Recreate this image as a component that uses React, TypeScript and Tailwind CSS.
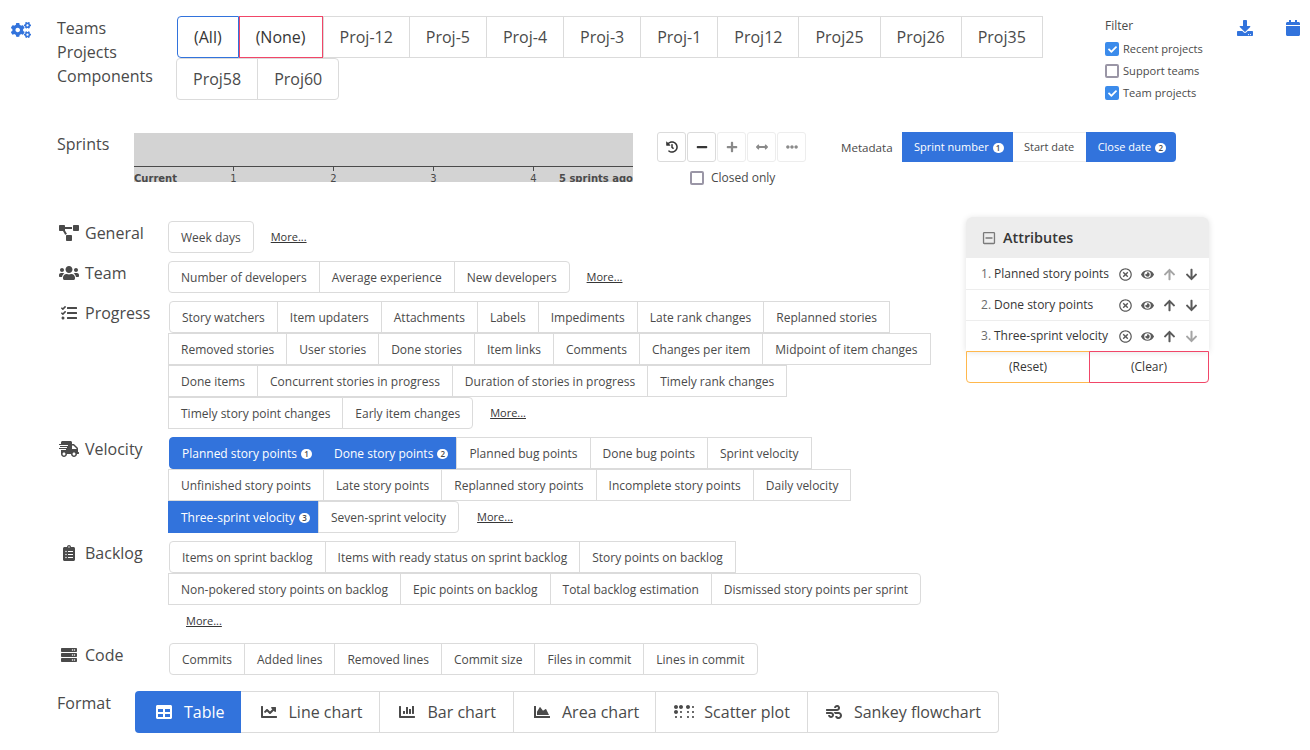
import type { ReactNode } from 'react';
import { FaArrowDown, FaArrowUp, FaArrowsAltH, FaBraille, FaCalendar, FaChartArea, FaChartBar, FaChartLine, FaCheck, FaClipboardList, FaCogs, FaDownload, FaEllipsisH, FaEye, FaHistory, FaMinus, FaPlus, FaProjectDiagram, FaRegMinusSquare, FaRegTimesCircle, FaServer, FaShippingFast, FaTable, FaTasks, FaUsers, FaWind } from 'react-icons/fa';

/* label, optional badge number: a badge means the button is selected */
type Metric = [string, number?];

function Badge({ n }: { n: number }) {
  return (
    <span className="ml-[4px] inline-flex h-[10px] w-[11px] items-center justify-center rounded-full bg-white text-[8px] font-semibold leading-none text-[#4a4a4a]">
      {n}
    </span>
  );
}

function MetricRow({ items, inset, roundLeft, roundRight, more }: { items: Metric[]; inset?: boolean; roundLeft?: boolean; roundRight?: boolean; more?: string }) {
  return (
    <div className={`flex h-[32px] items-center ${inset ? 'ml-px' : ''}`}>
      {items.map(([label, badge], i) => (
        <div
          key={label}
          className={`flex h-full items-center border pl-[12px] pt-px text-[12px] whitespace-nowrap ${i > 0 ? '-ml-px' : ''} ${badge ? 'border-[#3273dc] bg-[#3273dc] text-white' : 'border-[#dbdbdb] bg-white pr-[12px] text-[#4a4a4a]'} ${badge && items[i + 1]?.[1] ? 'pr-[9px]' : ''} ${badge && !items[i + 1]?.[1] ? 'pr-[8px]' : ''} ${roundLeft && i === 0 ? 'rounded-l-[4px]' : ''} ${roundRight && i === items.length - 1 ? 'rounded-r-[4px]' : ''}`}
        >
          {label}
          {badge ? <Badge n={badge} /> : null}
        </div>
      ))}
      {more ? <a className={`${more} pt-px text-[11px] text-[#363636] underline`}>More...</a> : null}
    </div>
  );
}

function Category({ icon, label, children, className }: { icon: ReactNode; label: string; children: ReactNode; className?: string }) {
  return (
    <div className={`flex ${className ?? ''}`}>
      <div className="flex h-[24px] w-[111px] shrink-0 items-center">
        <span className="ml-[2px] mr-[6px] flex w-[20px] shrink-0 items-center justify-center text-[#4a4a4a] [&>svg]:h-[16px] [&>svg]:w-[20px]">{icon}</span>
        <span className="text-[16px]">{label}</span>
      </div>
      <div className="flex flex-col">{children}</div>
    </div>
  );
}

function Check({ checked, label, className }: { checked?: boolean; label: string; className?: string }) {
  return (
    <div className={`flex items-center ${className ?? ''}`}>
      <span className={`flex h-[14px] w-[14px] items-center justify-center rounded-[2px] border-2 ${checked ? 'border-[#3b8beb] bg-[#3b8beb]' : 'border-[#9a96a6] bg-white'}`}>
        {checked ? <FaCheck className="text-[9px] text-white" /> : null}
      </span>
      <span className="ml-[4px]">{label}</span>
    </div>
  );
}

const PROJECTS = ['Proj-12', 'Proj-5', 'Proj-4', 'Proj-3', 'Proj-1', 'Proj12', 'Proj25', 'Proj26', 'Proj35'];

function ProjectButton({ label, className }: { label: string; className?: string }) {
  return <div className={`flex h-[42px] items-center border px-[16px] text-[16px] whitespace-nowrap ${className ?? 'border-[#dbdbdb]'}`}>{label}</div>;
}

const CONTROLS = [
  { icon: <FaHistory />, dim: false },
  { icon: <FaMinus />, dim: false },
  { icon: <FaPlus />, dim: true },
  { icon: <FaArrowsAltH />, dim: true },
  { icon: <FaEllipsisH />, dim: true },
];

const ATTRIBUTES = [
  { name: 'Planned story points', upDim: true, downDim: false },
  { name: 'Done story points', upDim: false, downDim: false },
  { name: 'Three-sprint velocity', upDim: false, downDim: true },
];

const FORMATS = [
  { label: 'Line chart', icon: <FaChartLine />, pad: 'pl-[20px] pr-[17px]' },
  { label: 'Bar chart', icon: <FaChartBar />, pad: 'pl-[19px] pr-[17px]' },
  { label: 'Area chart', icon: <FaChartArea />, pad: 'pl-[20px] pr-[16px]' },
  { label: 'Scatter plot', icon: <FaBraille className="-mx-[2px] h-[16px] w-[20px]" />, pad: 'pl-[20px] pr-[17px]' },
  { label: 'Sankey flowchart', icon: <FaWind />, pad: 'pl-[18px] pr-[17px] rounded-r-[4px]' },
];

function SprintAxis() {
  return (
    <svg width="499" height="49" className="block" style={{ fontFamily: '"DejaVu Sans", sans-serif' }}>
      <rect width="499" height="49" fill="#d3d3d3" />
      <line x1="0" x2="499" y1="33.5" y2="33.5" stroke="#4a4a4a" />
      {[1, 2, 3, 4].map((n) => (
        <g key={n}>
          <line x1={n * 100 - 0.5} x2={n * 100 - 0.5} y1="33" y2="38" stroke="#4a4a4a" />
          <text x={n * 100 - 0.5} y="49" fontSize="10" textAnchor="middle" fill="#4a4a4a">{n}</text>
        </g>
      ))}
      <text x="0" y="49" fontSize="10" fontWeight="700" fill="#4a4a4a">Current</text>
      <text x="499" y="49" fontSize="10" fontWeight="700" textAnchor="end" fill="#4a4a4a">5 sprints ago</text>
    </svg>
  );
}

export default function App() {
  return (
    <div className="h-[750px] w-[1310px] overflow-hidden bg-white text-[#4a4a4a]" style={{ fontFamily: '"Open Sans", sans-serif' }}>
      {/* Top row */}
      <div className="flex h-[100px] pt-[16px]">
        <div className="w-[57px] shrink-0 pl-[11px] pt-[4px]"><FaCogs className="text-[20px] text-[#3273dc]" /></div>
        <div className="w-[120px] shrink-0 text-[16px] leading-[24px]">
          <div>Teams</div>
          <div>Projects</div>
          <div>Components</div>
        </div>
        <div className="w-[867px] shrink-0">
          <div className="flex">
            <ProjectButton label="(All)" className="rounded-l-[4px] border-[#3273dc] text-[#363636]" />
            <ProjectButton label="(None)" className="border-[#f14668] text-[#363636]" />
            {PROJECTS.map((p, i) => <ProjectButton key={p} label={p} className={`border-[#dbdbdb] ${i > 0 ? '-ml-px' : ''}`} />)}
          </div>
          <div className="-ml-px flex">
            <ProjectButton label="Proj58" className="rounded-l-[4px] border-[#dbdbdb]" />
            <ProjectButton label="Proj60" className="-ml-px rounded-r-[4px] border-[#dbdbdb]" />
          </div>
        </div>
        <div className="ml-[61px] w-[132px] shrink-0 text-[11.1px]">
          <div className="h-[22px] pt-px text-[12px] leading-[18px]">Filter</div>
          <Check checked label="Recent projects" className="h-[22px]" />
          <Check label="Support teams" className="h-[22px]" />
          <Check checked label="Team projects" className="h-[22px]" />
        </div>
        <div className="w-[48px] shrink-0 pt-[4px]"><FaDownload className="text-[16px] text-[#3273dc]" /></div>
        <div className="pt-[4px]"><FaCalendar className="text-[16px] text-[#3273dc]" /></div>
      </div>

      {/* Sprints */}
      <div className="mt-[32px] flex h-[50px] pl-[57px]">
        <div className="w-[77px] shrink-0 text-[16px] leading-[24px]">Sprints</div>
        <div className="mt-px w-[499px] shrink-0"><SprintAxis /></div>
        <div className="ml-[24px] w-[184px] shrink-0">
          <div className="flex gap-px">
            {CONTROLS.map((c, i) => (
              <div key={i} className={`flex h-[30px] w-[29px] items-center justify-center rounded-[3px] border text-[12px] ${c.dim ? 'border-[#ededed] text-[#8a8a8a]' : 'border-[#dbdbdb] text-[#363636]'}`}>{c.icon}</div>
            ))}
          </div>
          <Check label="Closed only" className="ml-[33px] mt-[9px] text-[12px] [&>span:last-child]:ml-[7px] leading-[14px]" />
        </div>
        <div className="flex h-[30px] items-center pt-px text-[11.6px]">
          <span className="w-[61px]">Metadata</span>
          <div className="-mt-px flex h-[30px] items-center bg-[#3273dc] pb-px pl-[12px] pr-[9px] pt-[2px] text-[11px] text-white">Sprint number<Badge n={1} /></div>
          <div className="-mt-px flex h-[30px] w-[73px] items-center justify-center border-y border-[#ededed] pt-px text-[11px]">Start date</div>
          <div className="-mt-px flex h-[30px] items-center rounded-r-[4px] bg-[#3273dc] pb-px pl-[12px] pr-[10px] pt-[2px] text-[11px] text-white">Close date<Badge n={2} /></div>
        </div>
      </div>

      {/* Metric groups and selected attributes */}
      <div className="mt-[35px] flex">
        <div className="w-[966px] shrink-0 pl-[57px] pt-[4px]">
          <Category icon={<FaProjectDiagram />} label="General">
            <MetricRow items={[['Week days']]} roundLeft roundRight more="ml-[17px]" />
          </Category>
          <Category icon={<FaUsers />} label="Team" className="mt-[8px]">
            <MetricRow items={[['Number of developers'], ['Average experience'], ['New developers']]} roundLeft roundRight more="ml-[17px]" />
          </Category>
          <Category icon={<FaTasks />} label="Progress" className="mt-[8px]">
            <MetricRow inset roundLeft items={[['Story watchers'], ['Item updaters'], ['Attachments'], ['Labels'], ['Impediments'], ['Late rank changes'], ['Replanned stories']]} />
            <MetricRow items={[['Removed stories'], ['User stories'], ['Done stories'], ['Item links'], ['Comments'], ['Changes per item'], ['Midpoint of item changes']]} />
            <MetricRow items={[['Done items'], ['Concurrent stories in progress'], ['Duration of stories in progress'], ['Timely rank changes']]} />
            <MetricRow roundRight items={[['Timely story point changes'], ['Early item changes']]} more="ml-[17px]" />
          </Category>
          <Category icon={<FaShippingFast />} label="Velocity" className="mt-[8px]">
            <MetricRow inset roundLeft items={[['Planned story points', 1], ['Done story points', 2], ['Planned bug points'], ['Done bug points'], ['Sprint velocity']]} />
            <MetricRow items={[['Unfinished story points'], ['Late story points'], ['Replanned story points'], ['Incomplete story points'], ['Daily velocity']]} />
            <MetricRow roundRight items={[['Three-sprint velocity', 3], ['Seven-sprint velocity']]} more="ml-[18px]" />
          </Category>
          <Category icon={<FaClipboardList />} label="Backlog" className="mt-[8px]">
            <MetricRow inset roundLeft items={[['Items on sprint backlog'], ['Items with ready status on sprint backlog'], ['Story points on backlog']]} />
            <MetricRow roundRight items={[['Non-pokered story points on backlog'], ['Epic points on backlog'], ['Total backlog estimation'], ['Dismissed story points per sprint']]} />
            <MetricRow items={[]} more="ml-[18px]" />
          </Category>
          <Category icon={<FaServer />} label="Code" className="mt-[6px]">
            <MetricRow inset roundLeft roundRight items={[['Commits'], ['Added lines'], ['Removed lines'], ['Commit size'], ['Files in commit'], ['Lines in commit']]} />
          </Category>
        </div>

        <div className="w-[243px] shrink-0">
          <div className="overflow-hidden rounded-t-[6px] shadow-[0_1px_6px_rgba(10,10,10,0.12)]">
            <div className="flex h-[41px] items-center bg-[#ededed] pl-[16px] pt-px text-[14.4px] font-semibold text-[#363636]">
              <FaRegMinusSquare className="mr-[7px] text-[14px] font-normal text-[#7a7a7a]" />
              Attributes
            </div>
            {ATTRIBUTES.map((a, i) => (
              <div key={a.name} className={`flex h-[31px] items-center pl-[15px] text-[12px] text-[#363636] ${i > 0 ? 'border-t border-[#ededed]' : 'pt-px'}`}>
                <span className="w-[13px] text-[#6b6b6b]">{i + 1}.</span>
                <span className="w-[125px] whitespace-nowrap">{a.name}</span>
                <span className="flex w-[22px] text-[13px] text-[#5a5a5a]"><FaRegTimesCircle /></span>
                <span className="flex w-[22px] text-[13px] text-[#5a5a5a]"><FaEye /></span>
                <span className={`flex w-[22px] text-[13px] ${a.upDim ? 'text-[#a5a5a5]' : 'text-[#5a5a5a]'}`}><FaArrowUp /></span>
                <span className={`flex text-[13px] ${a.downDim ? 'text-[#a5a5a5]' : 'text-[#5a5a5a]'}`}><FaArrowDown /></span>
              </div>
            ))}
          </div>
          <div className="flex h-[32px] text-[12px] text-[#363636]">
            <div className="flex w-[124px] items-center justify-center rounded-bl-[4px] border border-[#ffb84d]">(Reset)</div>
            <div className="-ml-px flex w-[120px] items-center justify-center rounded-br-[4px] border border-[#f14668]">(Clear)</div>
          </div>
        </div>
      </div>

      {/* Format */}
      <div className="mt-[16px] flex pl-[57px]">
        <div className="h-[24px] w-[78px] text-[16px] leading-[24px]">Format</div>
        <div className="flex h-[42px] text-[16px]">
          <div className="flex h-full items-center gap-[12px] rounded-l-[4px] bg-[#3273dc] pl-[21px] pr-[16px] text-white"><FaTable />Table</div>
          {FORMATS.map((f) => (
            <div key={f.label} className={`flex h-full items-center gap-[12px] border-y border-r border-[#dbdbdb] whitespace-nowrap ${f.pad}`}>
              {f.icon}{f.label}
            </div>
          ))}
        </div>
      </div>
    </div>
  );
}
